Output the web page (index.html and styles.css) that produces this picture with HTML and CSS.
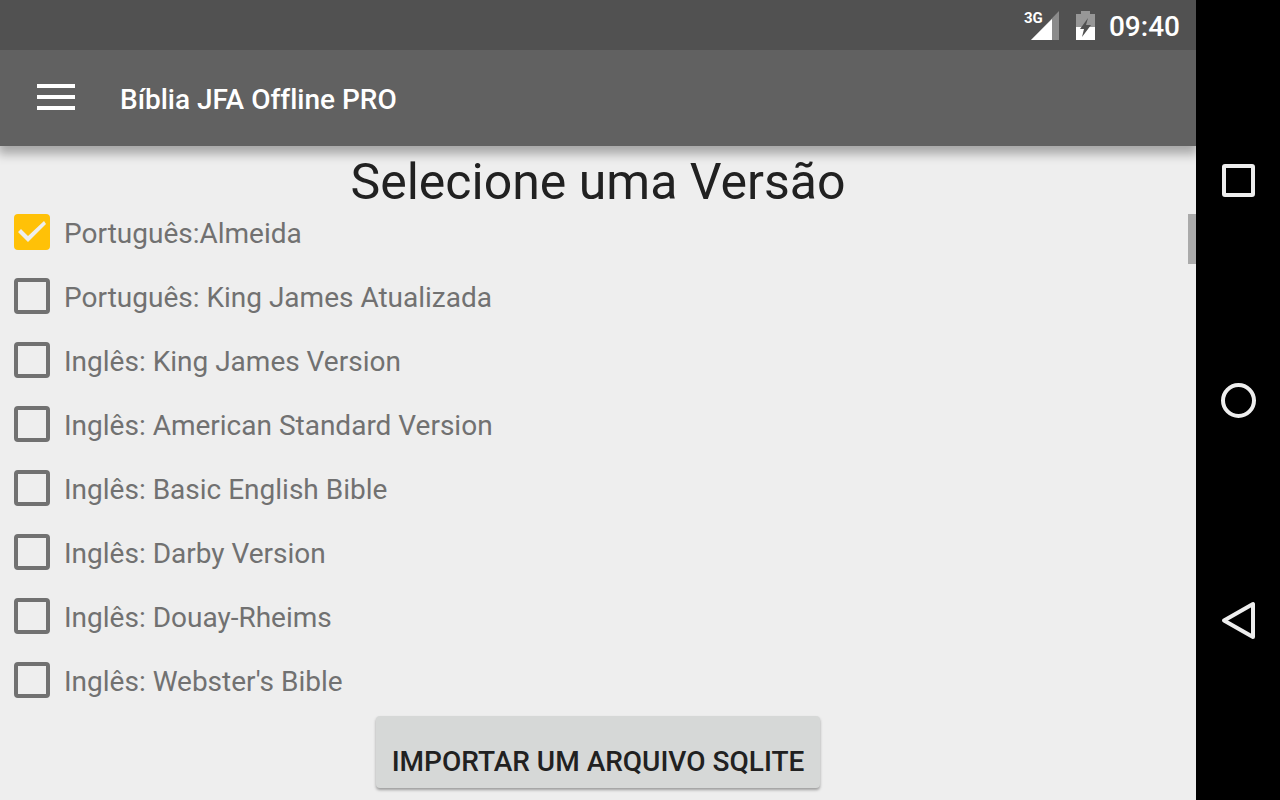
FILE: index.html
```
<!DOCTYPE html>
<html lang="pt">
<head>
  <meta charset="UTF-8" />
  <meta name="viewport" content="width=device-width, initial-scale=1" />
  <title>Bíblia JFA Offline PRO</title>
  <link rel="stylesheet" href="styles.css">
</head>
<body>
  <div class="app">
    <div class="status-bar">
      <div class="signal">
        <span class="network">3G</span>
        <svg width="29" height="29" viewBox="0 0 29 29">
          <path d="M28 0V29H0Z" fill="#8b8b8b" />
          <path d="M21 8V29H0Z" fill="#fff" />
        </svg>
      </div>
      <svg class="battery" width="19" height="29" viewBox="0 0 19 29">
        <path d="M5 0H14V3H19V16H0V3H5Z" fill="#979797" />
        <path d="M0 16H19V29H0Z" fill="#fff" />
        <path d="M12 7L4 18H8L6 26L15 14H10Z" fill="#515151" />
      </svg>
      <span class="clock">09:40</span>
    </div>

    <header class="toolbar">
      <button class="menu" aria-label="Menu">
        <svg width="38" height="26" viewBox="0 0 38 26" fill="#fff">
          <rect width="38" height="4" />
          <rect y="11" width="38" height="4" />
          <rect y="22" width="38" height="4" />
        </svg>
      </button>
      <span class="title">Bíblia JFA Offline PRO</span>
    </header>

    <main class="content">
      <h1>Selecione uma Versão</h1>
      <div class="versions">
        <label><input type="checkbox" checked>Português:Almeida</label>
        <label><input type="checkbox">Português: King James Atualizada</label>
        <label><input type="checkbox">Inglês: King James Version</label>
        <label><input type="checkbox">Inglês: American Standard Version</label>
        <label><input type="checkbox">Inglês: Basic English Bible</label>
        <label><input type="checkbox">Inglês: Darby Version</label>
        <label><input type="checkbox">Inglês: Douay-Rheims</label>
        <label><input type="checkbox">Inglês: Webster's Bible</label>
        <div class="scroll-thumb"></div>
      </div>
      <button class="import">Importar um arquivo SQLite</button>
    </main>
  </div>

  <nav class="nav-bar">
    <button aria-label="Recentes">
      <svg width="40" height="40" viewBox="0 0 40 40">
        <rect x="6" y="6" width="29" height="29" rx="1" />
      </svg>
    </button>
    <button aria-label="Início">
      <svg width="40" height="40" viewBox="0 0 40 40">
        <circle cx="20.500" cy="20.500" r="15.500" />
      </svg>
    </button>
    <button aria-label="Voltar">
      <svg width="40" height="40" viewBox="0 0 40 40">
        <path d="M35 4V37L6 20.500Z" />
      </svg>
    </button>
  </nav>
</body>
</html>
```

FILE: styles.css
```
* {
  box-sizing: border-box;
}

body {
  margin: 0;
  min-height: 100vh;
  display: flex;
  font-family: Roboto, sans-serif;
  font-size: 28px;
  font-variant-ligatures: none;
  background: #eee;
}

button {
  border: none;
  background: none;
  padding: 0;
  font: inherit;
  cursor: pointer;
}

svg {
  display: block;
}

.app {
  flex: 1;
  display: flex;
  flex-direction: column;
  overflow: hidden;
}

/* status bar */
.status-bar {
  position: relative;
  z-index: 1;
  height: 50px;
  padding: 0 16px;
  display: flex;
  justify-content: flex-end;
  align-items: center;
  gap: 16px;
  background: #515151;
  color: #fff;
}

.signal {
  position: relative;
}

.network {
  position: absolute;
  top: 0;
  left: -7px;
  font-size: 15px;
  line-height: 15px;
  font-weight: 700;
}

.clock {
  margin-left: -2px;
  padding-top: 4px;
  font-weight: 500;
  line-height: 32px;
}

/* toolbar */
.toolbar {
  height: 96px;
  padding: 0 37px;
  display: flex;
  align-items: center;
  gap: 45px;
  background: #616161;
  color: #fff;
  box-shadow: 0 6px 10px 2px rgba(0, 0, 0, 0.3);
}

.menu {
  padding-bottom: 2px;
}

.title {
  padding-top: 2px;
  font-weight: 500;
}

/* version list */
.content {
  flex: 1;
  display: flex;
  flex-direction: column;
}

h1 {
  margin: 0;
  padding-top: 4px;
  font-size: 50px;
  line-height: 64px;
  font-weight: 400;
  text-align: center;
  color: #212121;
}

.versions {
  position: relative;
  flex: 1;
  display: flex;
  flex-direction: column;
  gap: 24px;
  padding-left: 14px;
}

.versions label {
  display: flex;
  align-items: flex-start;
  gap: 14px;
  line-height: 40px;
  color: #717171;
}

.versions input {
  appearance: none;
  width: 36px;
  height: 36px;
  margin: 0;
  border: 4px solid #717171;
  border-radius: 4px;
}

.versions input:checked {
  border: none;
  background: #ffc107;
}

.versions input:checked::before {
  content: "";
  display: block;
  width: 36px;
  height: 36px;
  background: #eee;
  clip-path: polygon(4px 18px, 7px 15px, 14px 22px, 30px 7px, 32px 10px, 14px 28px);
}

.scroll-thumb {
  position: absolute;
  top: 0;
  right: 0;
  width: 8px;
  height: 50px;
  background: #aaa;
}

.import {
  align-self: center;
  margin: 12px 0;
  padding: 28px 16px 8px;
  border-radius: 4px;
  background: #d6d8d7;
  box-shadow: 0 2px 3px rgba(0, 0, 0, 0.35);
  color: #212121;
  font-weight: 500;
  line-height: 36px;
  text-transform: uppercase;
}

/* navigation buttons */
.nav-bar {
  width: 84px;
  padding: 70px 0;
  display: flex;
  flex-direction: column;
  background: #000;
}

.nav-bar button {
  flex: 1;
  display: flex;
  justify-content: center;
  align-items: center;
}

.nav-bar svg {
  fill: none;
  stroke: #eee;
  stroke-width: 4;
  stroke-linejoin: round;
}
```
